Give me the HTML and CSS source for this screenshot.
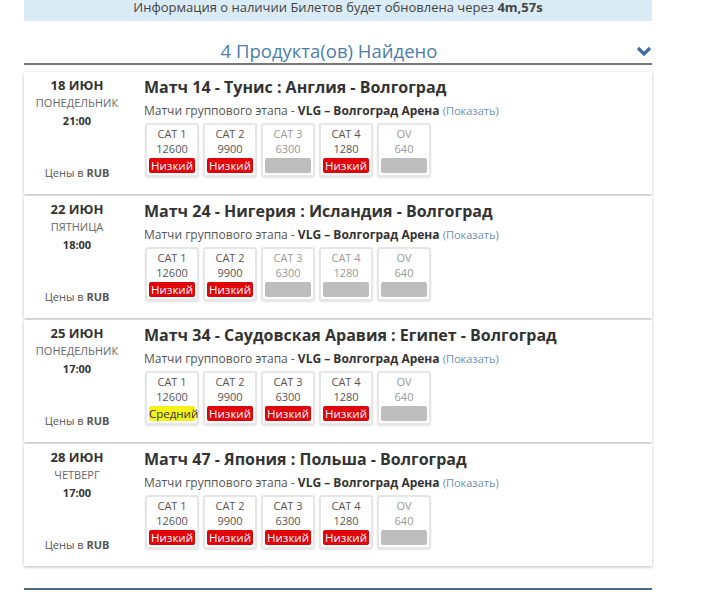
FILE: index.html
```html
<!DOCTYPE html>
<html lang="ru">
<head>
  <meta charset="UTF-8" />
  <title>Продукты</title>
  <link rel="stylesheet" href="styles.css">
</head>
<body>
  <div class="wrap">
    <div class="notice">Информация о наличии Билетов будет обновлена через <strong>4m,57s</strong></div>

    <div class="found">
      <span>4 Продукта(ов) Найдено</span>
      <svg class="chevron" width="16" height="10" viewBox="0 0 16 10"><path d="M2 2 L8 8 L14 2" fill="none" stroke="#3d6d9c" stroke-width="3.2"/></svg>
    </div>

    <div class="card">
      <div class="when">
        <div class="date">18 ИЮН</div>
        <div class="day">ПОНЕДЕЛЬНИК</div>
        <div class="time">21:00</div>
        <div class="cur">Цены в <b>RUB</b></div>
      </div>
      <div class="info">
        <h3>Матч 14 - Тунис : Англия - Волгоград</h3>
        <p class="stage">Матчи группового этапа - <b>VLG – Волгоград Арена</b> <a href="#">(Показать)</a></p>
        <div class="cats">
          <div class="cat"><span>CAT 1</span><span>12600</span><i class="low">Низкий</i></div>
          <div class="cat"><span>CAT 2</span><span>9900</span><i class="low">Низкий</i></div>
          <div class="cat off"><span>CAT 3</span><span>6300</span><i class="none"></i></div>
          <div class="cat"><span>CAT 4</span><span>1280</span><i class="low">Низкий</i></div>
          <div class="cat off"><span>OV</span><span>640</span><i class="none"></i></div>
        </div>
      </div>
    </div>

    <div class="card">
      <div class="when">
        <div class="date">22 ИЮН</div>
        <div class="day">ПЯТНИЦА</div>
        <div class="time">18:00</div>
        <div class="cur">Цены в <b>RUB</b></div>
      </div>
      <div class="info">
        <h3>Матч 24 - Нигерия : Исландия - Волгоград</h3>
        <p class="stage">Матчи группового этапа - <b>VLG – Волгоград Арена</b> <a href="#">(Показать)</a></p>
        <div class="cats">
          <div class="cat"><span>CAT 1</span><span>12600</span><i class="low">Низкий</i></div>
          <div class="cat"><span>CAT 2</span><span>9900</span><i class="low">Низкий</i></div>
          <div class="cat off"><span>CAT 3</span><span>6300</span><i class="none"></i></div>
          <div class="cat off"><span>CAT 4</span><span>1280</span><i class="none"></i></div>
          <div class="cat off"><span>OV</span><span>640</span><i class="none"></i></div>
        </div>
      </div>
    </div>

    <div class="card">
      <div class="when">
        <div class="date">25 ИЮН</div>
        <div class="day">ПОНЕДЕЛЬНИК</div>
        <div class="time">17:00</div>
        <div class="cur">Цены в <b>RUB</b></div>
      </div>
      <div class="info">
        <h3>Матч 34 - Саудовская Аравия : Египет - Волгоград</h3>
        <p class="stage">Матчи группового этапа - <b>VLG – Волгоград Арена</b> <a href="#">(Показать)</a></p>
        <div class="cats">
          <div class="cat"><span>CAT 1</span><span>12600</span><i class="mid">Средний</i></div>
          <div class="cat"><span>CAT 2</span><span>9900</span><i class="low">Низкий</i></div>
          <div class="cat"><span>CAT 3</span><span>6300</span><i class="low">Низкий</i></div>
          <div class="cat"><span>CAT 4</span><span>1280</span><i class="low">Низкий</i></div>
          <div class="cat off"><span>OV</span><span>640</span><i class="none"></i></div>
        </div>
      </div>
    </div>

    <div class="card">
      <div class="when">
        <div class="date">28 ИЮН</div>
        <div class="day">ЧЕТВЕРГ</div>
        <div class="time">17:00</div>
        <div class="cur">Цены в <b>RUB</b></div>
      </div>
      <div class="info">
        <h3>Матч 47 - Япония : Польша - Волгоград</h3>
        <p class="stage">Матчи группового этапа - <b>VLG – Волгоград Арена</b> <a href="#">(Показать)</a></p>
        <div class="cats">
          <div class="cat"><span>CAT 1</span><span>12600</span><i class="low">Низкий</i></div>
          <div class="cat"><span>CAT 2</span><span>9900</span><i class="low">Низкий</i></div>
          <div class="cat"><span>CAT 3</span><span>6300</span><i class="low">Низкий</i></div>
          <div class="cat"><span>CAT 4</span><span>1280</span><i class="low">Низкий</i></div>
          <div class="cat off"><span>OV</span><span>640</span><i class="none"></i></div>
        </div>
      </div>
    </div>

    <div class="bottom-rule"></div>
  </div>
</body>
</html>
```

FILE: styles.css
```css
body {
  margin: 0;
  background: #fff;
  font-family: 'Open Sans', 'Liberation Sans', sans-serif;
  color: #333;
}

.wrap {
  width: 628px;
  margin-left: 24px;
}

.notice {
  background: #d9ebf5;
  height: 21px;
  line-height: 15px;
  text-align: center;
  font-size: 13px;
  color: #444;
}

.found {
  position: relative;
  height: 44px;
  line-height: 18px;
  padding: 21px 18px 0 0;
  box-sizing: border-box;
  border-bottom: 2px solid #777;
  text-align: center;
  font-size: 18.5px;
  color: #4b7eab;
}

.chevron {
  position: absolute;
  right: 0;
  top: 25px;
}

.card {
  display: flex;
  height: 122px;
  margin-top: 7px;
  margin-bottom: -3px;
  background: #fff;
  box-shadow: 0 1px 3px rgba(0, 0, 0, 0.28);
  box-sizing: border-box;
}

.card + .card {
  margin-top: 5px;
}

.when {
  width: 106px;
  display: flex;
  flex-direction: column;
  align-items: center;
  padding: 4px 0 12px;
  box-sizing: border-box;
  font-size: 11px;
  line-height: 18px;
}

.date {
  font-size: 13px;
  font-weight: bold;
}

.day {
  color: #666;
}

.time {
  font-weight: bold;
}

.cur {
  margin-top: auto;
  color: #555;
}

.info {
  margin-left: 14px;
  padding-top: 4px;
}

.info h3 {
  margin: 0;
  font-size: 16px;
  line-height: 23px;
  font-weight: bold;
  color: #333;
}

.stage {
  margin: 0;
  font-size: 12px;
  line-height: 24px;
  color: #555;
}

.stage b {
  color: #333;
}

.stage a {
  color: #6a8fb5;
  font-size: 11px;
  text-decoration: none;
}

.cats {
  display: flex;
  gap: 4px;
  margin-left: 1px;
}

.cat {
  width: 54px;
  height: 54px;
  box-sizing: border-box;
  border: 2px solid #e6e6e6;
  border-radius: 3px;
  box-shadow: 0 1px 2px rgba(0, 0, 0, 0.12);
  display: flex;
  flex-direction: column;
  align-items: center;
  padding: 1px 2px 2px;
  font-size: 11px;
  line-height: 15px;
  color: #555;
}

.cat.off {
  color: #999;
}

.cat i {
  font-style: normal;
  width: 100%;
  height: 15px;
  margin-top: auto;
  border-radius: 2px;
  text-align: center;
  line-height: 15px;
  font-size: 11.5px;
}

.cat .low {
  background: #e0040b;
  color: #fff;
}

.cat .mid {
  background: #f4f21a;
  color: #333;
}

.cat .none {
  background: #bdbdbd;
}

.bottom-rule {
  margin-top: 25px;
  border-top: 2px solid #4d6b88;
}
```
